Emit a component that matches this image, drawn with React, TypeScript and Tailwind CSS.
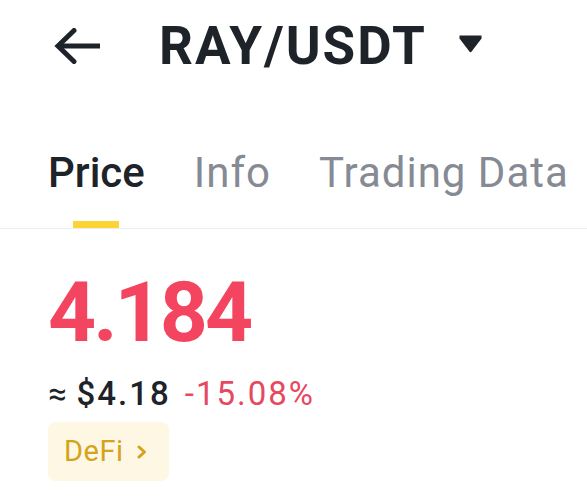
import React from 'react';

const BackArrow: React.FC = () => (
  <svg width="47" height="36" viewBox="0 0 47 36" fill="none" className="shrink-0">
    <path d="M4 18 H46" stroke="#1e2329" strokeWidth="5" strokeLinecap="butt" />
    <path d="M20 2.5 L4 18 L20 33.5" stroke="#1e2329" strokeWidth="5" strokeLinecap="round" strokeLinejoin="miter" />
  </svg>
);

const Caret: React.FC = () => (
  <svg width="23" height="18" viewBox="0 0 23 18" className="shrink-0">
    <path d="M0.5 0.5 H22.5 V3.5 L12.6 16.6 Q11.5 17.8 10.4 16.6 L0.5 3.5 Z" fill="#1e2329" />
  </svg>
);

const Chevron: React.FC = () => (
  <svg width="12" height="14" viewBox="0 0 12 14" fill="none">
    <path d="M3 2 L8.5 7 L3 12" stroke="#d4a31b" strokeWidth="3" strokeLinecap="round" strokeLinejoin="round" />
  </svg>
);

export default function App() {
  return (
    <div className="w-[587px] h-[499px] bg-white overflow-hidden font-['Roboto',sans-serif]">
      {/* header */}
      <header className="h-[92px] flex items-center pl-[54px]">
        <BackArrow />
        <h1 className="ml-[58px] text-[53px] leading-none font-bold text-[#1e2329] tracking-[2px]">RAY/USDT</h1>
        <div className="ml-[32px] mt-[-4px]">
          <Caret />
        </div>
      </header>

      {/* tabs */}
      <nav className="pt-[56px] border-b border-[#eaecef] flex pl-[48px]">
        <div className="flex flex-col items-center">
          <span className="text-[42px] leading-[50px] font-medium text-[#1e2329]">Price</span>
          <span className="mt-[23px] w-[46px] h-[7px] bg-[#fcd535]" />
        </div>
        <span className="ml-[49px] text-[42px] leading-[50px] text-[#858a94] tracking-[1px]">Info</span>
        <span className="ml-[48px] text-[42px] leading-[50px] text-[#858a94] tracking-[1px]">Trading Data</span>
      </nav>

      {/* price */}
      <section className="pl-[48px]">
        <div className="mt-[42px] text-[84px] leading-none font-bold text-[#f3455f] tracking-[-3px]">4.184</div>
        <div className="mt-[20px] flex items-baseline text-[33px] leading-[38px] tracking-[2px]">
          <span className="text-[#1e2329]">≈</span>
          <span className="ml-[8px] font-medium text-[#1e2329]">$4.18</span>
          <span className="ml-[14px] text-[#e5485f]">-15.08%</span>
        </div>
        <div className="mt-[9px] w-[121px] h-[59px] rounded-[8px] bg-[#fdf7e3] flex items-center pl-[16px] gap-[12px]">
          <span className="text-[29px] text-[#d4a31b] tracking-[0.5px]">DeFi</span>
          <Chevron />
        </div>
      </section>
    </div>
  );
}
